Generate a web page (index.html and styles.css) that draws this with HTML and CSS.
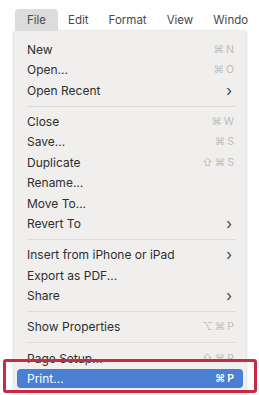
FILE: index.html
```html
<!DOCTYPE html>
<html>
<head>
<meta charset="utf-8">
<link rel="stylesheet" href="styles.css">
</head>
<body>
<div class="screen">
  <div class="menubar">
    <span class="mi active">File</span>
    <span class="mi">Edit</span>
    <span class="mi">Format</span>
    <span class="mi">View</span>
    <span class="mi">Window</span>
  </div>
  <div class="menu">
    <div class="row"><span>New</span><span class="sc">⌘N</span></div>
    <div class="row"><span>Open...</span><span class="sc">⌘O</span></div>
    <div class="row"><span>Open Recent</span><span class="chev">›</span></div>
    <div class="sep"></div>
    <div class="row"><span>Close</span><span class="sc">⌘W</span></div>
    <div class="row"><span>Save...</span><span class="sc">⌘S</span></div>
    <div class="row"><span>Duplicate</span><span class="sc">⇧⌘S</span></div>
    <div class="row"><span>Rename...</span></div>
    <div class="row"><span>Move To...</span></div>
    <div class="row"><span>Revert To</span><span class="chev">›</span></div>
    <div class="sep"></div>
    <div class="row"><span>Insert from iPhone or iPad</span><span class="chev">›</span></div>
    <div class="row"><span>Export as PDF...</span></div>
    <div class="row"><span>Share</span><span class="chev">›</span></div>
    <div class="sep"></div>
    <div class="row"><span>Show Properties</span><span class="sc">⌥⌘P</span></div>
    <div class="sep last"></div>
    <div class="row"><span>Page Setup...</span><span class="sc">⇧⌘P</span></div>
    <div class="row selected"><span>Print...</span><span class="sc">⌘P</span></div>
  </div>
  <div class="callout"></div>
</div>
</body>
</html>
```
FILE: styles.css
```css
html, body {
  margin: 0;
  padding: 0;
  background: #ffffff;
}
.screen {
  position: relative;
  width: 259px;
  height: 395px;
  overflow: hidden;
  font-family: Inter, "Noto Sans", sans-serif;
  font-size: 12px;
  color: #2e2e2e;
}
.menubar {
  display: flex;
  padding: 9px 0 0 15px;
  width: 233px;
  overflow: hidden;
  white-space: nowrap;
}
.mi {
  padding: 0 10px;
  height: 22px;
  line-height: 22px;
  font-size: 11.5px;
  color: #4a4a4a;
}
.mi.active {
  padding: 0 12px;
  background: #dcdcdc;
  border-radius: 4px 4px 0 0;
}
.menu {
  margin-left: 14px;
  width: 232px;
  background: #f0efee;
  padding-top: 8px;
  padding-bottom: 12px;
  box-shadow: -1px 0 2px rgba(0,0,0,0.12), 1px 0 2px rgba(0,0,0,0.12);
}
.row {
  display: flex;
  justify-content: space-between;
  align-items: center;
  height: 20.5px;
  padding: 0 12px 0 13px;
}
.sc {
  color: #bdbdbd;
  letter-spacing: 2px;
  font-size: 10.5px;
  margin-right: -2px;
}
.chev {
  font-size: 15px;
  color: #444;
  margin-right: 2px;
  line-height: 1;
}
.sep {
  height: 1px;
  background: #dcdbda;
  margin: 5px 10px 4.5px 13px;
}
.sep.last {
  margin-bottom: 5.5px;
}
.row.selected {
  height: 19px;
  background: #4a7fd2;
  color: #ffffff;
  margin: 0 3px;
  padding: 0 9px 0 10px;
  border-radius: 4px;
}
.row.selected .sc {
  color: #ffffff;
  font-weight: 600;
}
.callout {
  position: absolute;
  left: 3px;
  top: 359px;
  width: 248px;
  height: 28px;
  border: 3px solid #c82a40;
  border-radius: 3px;
}
```
